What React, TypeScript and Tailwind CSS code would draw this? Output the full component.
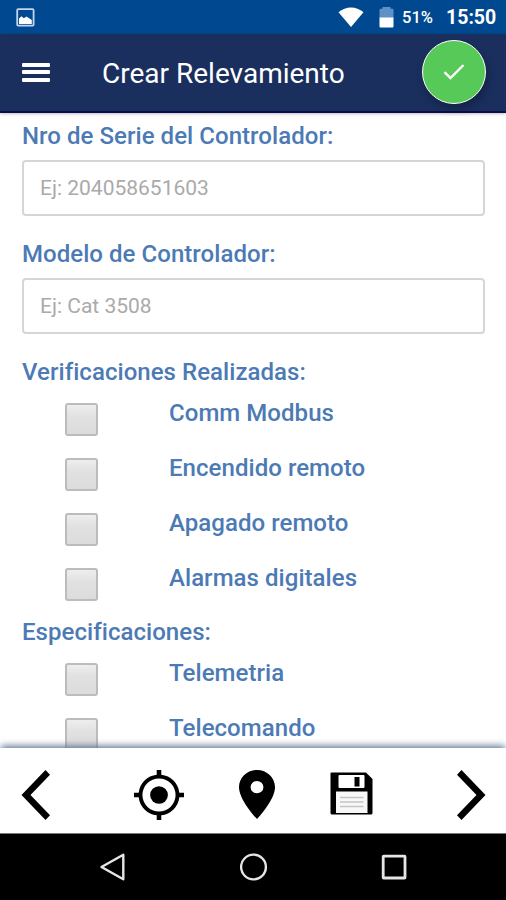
import type { ReactNode } from "react";

const VERIFICACIONES = [
  "Comm Modbus",
  "Encendido remoto",
  "Apagado remoto",
  "Alarmas digitales",
];
const ESPECIFICACIONES = ["Telemetria", "Telecomando"];

function StatusBar() {
  return (
    <div className="flex h-[34px] shrink-0 items-center bg-[#004990] pl-[16px] pr-[11px] text-white">
      <svg width="19" height="19" viewBox="0 0 19 19" className="mt-px">
        <rect x="1.2" y="1.2" width="16.4" height="16.4" rx="1" fill="none" stroke="#c3d4ee" strokeWidth="1.8" />
        <path d="M3 16v-5.500l2.500-2.200 2.300 2 2.700-1.800 5.300 3.500v4z" fill="#fff" />
      </svg>
      <svg width="26" height="20" viewBox="0 0 26 20" className="ml-auto">
        <path d="M0.5 5.3C8 -1.2 18 -1.2 25.5 5.3L13 20z" fill="#fff" />
      </svg>
      <svg width="15" height="21" viewBox="0 0 15 21" className="ml-[15px] mt-px">
        <path d="M0.5 11V3.2q0-1.4 1.4-1.4H3.5V0h8v1.8h1.6q1.4 0 1.4 1.4V11z" fill="#5f91c6" />
        <path d="M0.5 10.5h14V19.6q0 1-1 1h-12q-1 0-1-1z" fill="#fff" />
      </svg>
      <span className="ml-[8px] mt-[2px] w-[32px] whitespace-nowrap text-[16.500px] font-medium leading-none">
        51%
      </span>
      <span className="ml-[12px] mt-[2px] w-[49px] whitespace-nowrap text-[19.500px] font-bold leading-none">
        15:50
      </span>
    </div>
  );
}

function Header() {
  return (
    <header className="relative z-10 flex h-[79px] shrink-0 items-center border-b-2 border-[#0b0c50] bg-[#1a2f5e] pl-[22px] pr-[20px] text-white shadow-[0_1px_3px_rgba(0,0,0,0.25)]">
      <button aria-label="Menú" className="-mt-px flex w-[28px] flex-col gap-[3.5px]">
        <span className="h-[4px] w-full rounded-[1px] bg-white" />
        <span className="h-[4px] w-full rounded-[1px] bg-white" />
        <span className="h-[4px] w-full rounded-[1px] bg-white" />
      </button>
      <h1 className="ml-[52px] mt-[3px] whitespace-nowrap text-[28px] leading-8">
        Crear Relevamiento
      </h1>
      <button
        aria-label="Confirmar"
        className="-mt-[2px] ml-auto flex size-[64px] items-center justify-center rounded-full border-[1.5px] border-white bg-[#56c958] shadow-[2px_5px_8px_rgba(0,0,0,0.25)]"
      >
        <svg width="22" height="18" viewBox="0 0 22 18">
          <path d="M1.5 9.2l6 5.8L20.5 2" fill="none" stroke="#fff" strokeWidth="2.4" />
        </svg>
      </button>
    </header>
  );
}

function Label({ children }: { children: ReactNode }) {
  return (
    <div className="h-8 whitespace-nowrap text-[24px] font-medium leading-8 tracking-[0.05px] text-[#4c7ab5]">
      {children}
    </div>
  );
}

function Field({ label, placeholder }: { label: string; placeholder: string }) {
  return (
    <div className="mb-[22px]">
      <Label>{label}</Label>
      <input
        placeholder={placeholder}
        className="mt-2 block h-14 w-full rounded-[4px] border-2 border-[#d6d6d6] bg-white px-[16px] text-[21px] placeholder:text-[#aaaaaa]"
      />
    </div>
  );
}

function CheckGroup({ label, items }: { label: string; items: string[] }) {
  return (
    <div className="-mb-px">
      <Label>{label}</Label>
      <ul className="pt-[9px]">
        {items.map((item) => (
          <li key={item} className="flex h-[55px] items-start pl-[43px]">
            <span className="mt-[6px] size-[33px] shrink-0 rounded-[3px] border-2 border-[#bcbcbc] bg-linear-to-b from-[#eeeeee] via-[#e1e1e1] via-40% to-[#dcdcdc]" />
            <div className="ml-[71px]">
              <Label>{item}</Label>
            </div>
          </li>
        ))}
      </ul>
    </div>
  );
}

function Toolbar() {
  return (
    <div className="relative flex h-[86px] shrink-0 items-start border-b border-[#777777] bg-white pl-[21px] pr-[20px] pt-[22px] shadow-[0_-3px_7px_-1px_#5d7390]">
      <svg width="29" height="50" viewBox="0 0 29 50">
        <path d="M24.5 0L29 4.7 9.5 25 29 45.3 24.5 50 0.5 25z" />
      </svg>
      <svg width="50" height="50" viewBox="1 1 22 22" className="ml-[84px]">
        <path
          fillRule="evenodd"
          d="M20.94 11A8.99 8.99 0 0 0 13 3.06V1h-2v2.06A8.99 8.99 0 0 0 3.06 11H1v2h2.06A8.99 8.99 0 0 0 11 20.94V23h2v-2.06A8.99 8.99 0 0 0 20.94 13H23v-2zM12 19.3a7.3 7.3 0 1 1 0-14.6 7.3 7.3 0 0 1 0 14.6z"
        />
        <circle cx="12" cy="12" r="3.9" />
      </svg>
      <svg width="36" height="49" viewBox="5 2 14 20" preserveAspectRatio="none" className="ml-[55px]">
        <path d="M12 2C8.13 2 5 5.13 5 9c0 5.25 7 13 7 13s7-7.75 7-13c0-3.87-3.13-7-7-7zm0 9.5a2.5 2.5 0 1 1 0-5 2.5 2.5 0 0 1 0 5z" />
      </svg>
      <svg width="43" height="43" viewBox="0 0 43 43" className="ml-[55px] mt-[2px]">
        <path d="M1.5 0.5H36L42.5 7V41Q42.5 42.5 41 42.5H2Q0.5 42.5 0.5 41V1.5Q0.5 0.5 1.5 0.5z" />
        <rect x="8.5" y="3" width="26" height="13" rx="1" fill="#fff" />
        <rect x="24.5" y="5" width="5" height="9.5" />
        <rect x="6" y="19.5" width="31.5" height="21.5" fill="#f8f8f8" />
        <path d="M10 25.5h23.5M10 30h23.5M10 34.5h23.5" stroke="#c4c4c4" strokeWidth="1.3" />
      </svg>
      <svg width="29" height="50" viewBox="0 0 29 50" className="ml-auto">
        <path d="M4.5 0L0 4.7 19.5 25 0 45.3 4.5 50 28.5 25z" />
      </svg>
    </div>
  );
}

function NavBar() {
  return (
    <div className="relative flex h-[66px] shrink-0 items-center bg-black pl-[99px] pr-[99px]">
      <svg width="28" height="28" viewBox="0 0 28 28" fill="none" stroke="#e6e6e6" strokeWidth="2.4">
        <path d="M2.5 14L24.3 1.8V26.2z" strokeLinejoin="round" />
      </svg>
      <svg width="28" height="28" viewBox="0 0 28 28" fill="none" stroke="#e6e6e6" strokeWidth="2.4" className="ml-[113px]">
        <circle cx="13.5" cy="14" r="12.4" />
      </svg>
      <svg width="26" height="26" viewBox="0 0 26 26" fill="none" stroke="#e6e6e6" strokeWidth="2.8" className="ml-auto">
        <rect x="2.2" y="2.2" width="21.8" height="21.8" rx="0.5" />
      </svg>
    </div>
  );
}

export default function App() {
  return (
    <div className="flex h-[900px] w-[506px] flex-col overflow-hidden bg-white font-[Roboto,sans-serif]">
      <StatusBar />
      <Header />
      <main className="min-h-0 flex-1 overflow-hidden pl-[22px] pr-[21px] pt-[7px]">
        <Field label="Nro de Serie del Controlador:" placeholder="Ej: 204058651603" />
        <Field label="Modelo de Controlador:" placeholder="Ej: Cat 3508" />
        <CheckGroup label="Verificaciones Realizadas:" items={VERIFICACIONES} />
        <CheckGroup label="Especificaciones:" items={ESPECIFICACIONES} />
      </main>
      <Toolbar />
      <NavBar />
    </div>
  );
}
